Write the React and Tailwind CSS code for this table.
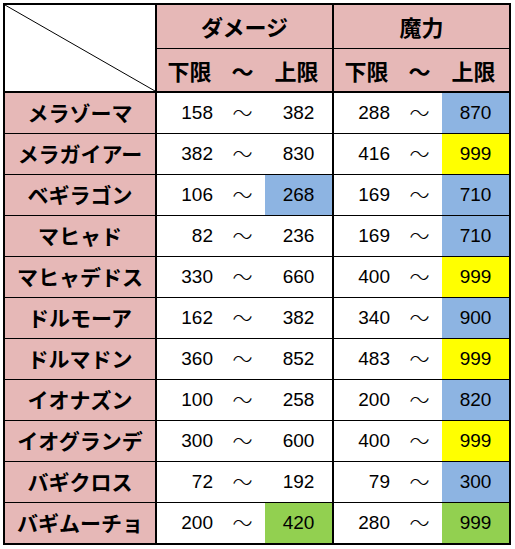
import React from "react";

const rows = [
  ["メラゾーマ", 158, 382, "", 288, 870, "b"],
  ["メラガイアー", 382, 830, "", 416, 999, "y"],
  ["ベギラゴン", 106, 268, "b", 169, 710, "b"],
  ["マヒャド", 82, 236, "", 169, 710, "b"],
  ["マヒャデドス", 330, 660, "", 400, 999, "y"],
  ["ドルモーア", 162, 382, "", 340, 900, "b"],
  ["ドルマドン", 360, 852, "", 483, 999, "y"],
  ["イオナズン", 100, 258, "", 200, 820, "b"],
  ["イオグランデ", 300, 600, "", 400, 999, "y"],
  ["バギクロス", 72, 192, "", 79, 300, "b"],
  ["バギムーチョ", 200, 420, "g", 280, 999, "g"],
];

const bg = {
  "": "bg-white",
  b: "bg-[#8db4e2]",
  y: "bg-[#ffff00]",
  g: "bg-[#92d050]",
};

const jp = { fontFamily: '"Noto Sans CJK JP", "Noto Sans", sans-serif' };
const num = { fontFamily: '"Liberation Sans", Arial, sans-serif' };

function Range({ lo, hi, color }) {
  return (
    <div className="flex w-[175px] h-full">
      <div className="w-[63px] flex items-center justify-end pr-[7px] text-[19px] text-black" style={num}>
        {lo}
      </div>
      <div className="w-[45px] flex items-center justify-center text-[20px] font-light text-black" style={jp}>
        〜
      </div>
      <div className={`w-[67px] flex items-center justify-center text-[19px] text-black ${bg[color]}`} style={num}>
        {hi}
      </div>
    </div>
  );
}

function SubHeader() {
  return (
    <div className="flex h-[42px] text-[22px]">
      <div className="w-[63px] flex items-center justify-center pl-[2px]">下限</div>
      <div className="w-[45px] flex items-center justify-center">〜</div>
      <div className="w-[67px] flex items-center justify-center pr-[4px]">上限</div>
    </div>
  );
}

export default function App() {
  return (
    <div className="w-[515px] h-[549px] bg-white pt-[3px] pl-[3px]">
      <div className="w-[508px] border-2 border-black bg-white" style={jp}>
        <div className="flex h-[88px] border-b-2 border-black font-bold text-[22px] text-black">
          <div className="relative w-[152px] h-full border-r-2 border-black bg-white">
            <svg className="absolute inset-0" width="150" height="86" viewBox="0 0 150 86">
              <line x1="0" y1="0" x2="150" y2="86" stroke="black" strokeWidth="1" />
            </svg>
          </div>
          <div className="w-[177px] h-full border-r-2 border-black bg-[#e6b8b7] flex flex-col">
            <div className="h-[44px] border-b border-black flex items-center justify-center">ダメージ</div>
            <SubHeader />
          </div>
          <div className="w-[175px] h-full bg-[#e6b8b7] flex flex-col">
            <div className="h-[44px] border-b border-black flex items-center justify-center">魔力</div>
            <SubHeader />
          </div>
        </div>
        {rows.map((r, i) => {
          const last = i === rows.length - 1;
          return (
            <div
              key={r[0]}
              className={`flex ${last ? "h-[40px]" : "h-[41px] border-b border-black"}`}
            >
              <div className="w-[152px] h-full border-r-2 border-black bg-[#e6b8b7] flex items-center justify-center font-bold text-[21px] text-black">
                {r[0]}
              </div>
              <div className="w-[177px] h-full border-r-2 border-black flex">
                <Range lo={r[1]} hi={r[2]} color={r[3]} />
              </div>
              <Range lo={r[4]} hi={r[5]} color={r[6]} />
            </div>
          );
        })}
      </div>
    </div>
  );
}
